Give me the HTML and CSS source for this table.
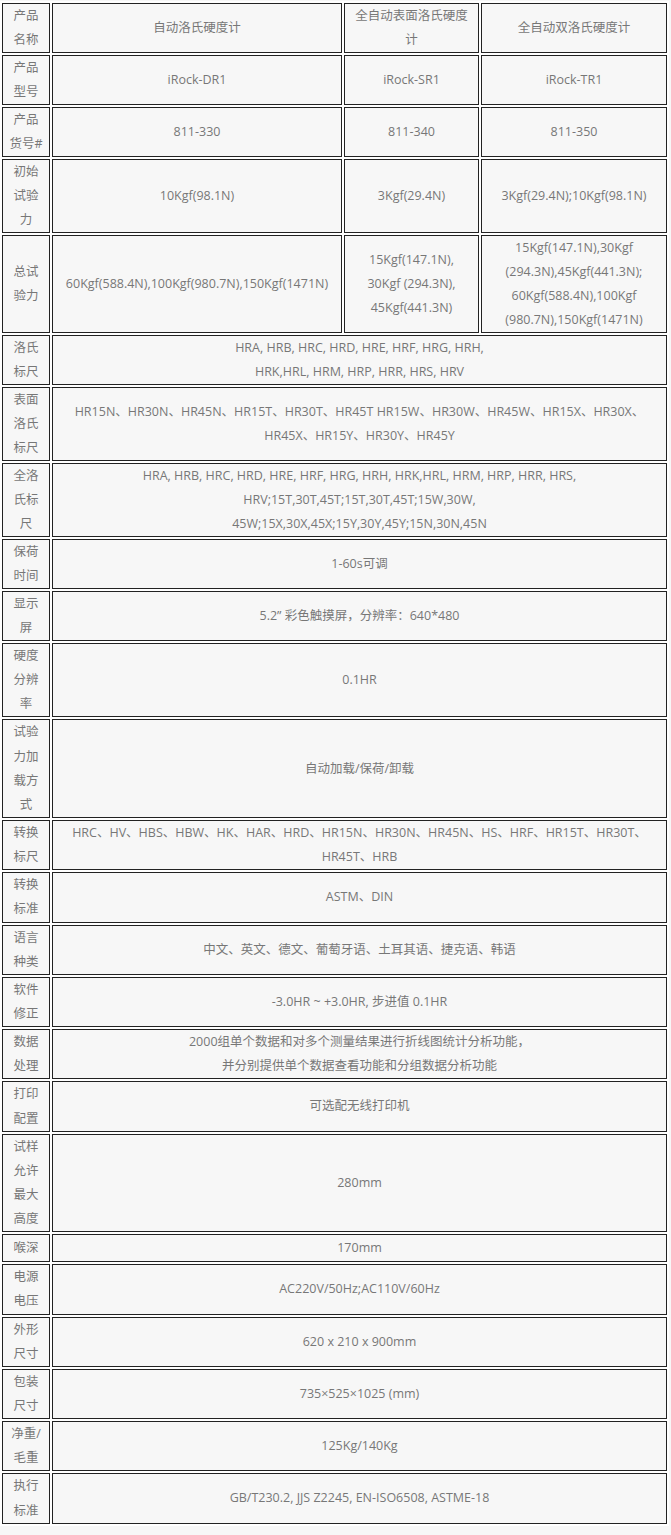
FILE: index.html
```html
<!DOCTYPE html>
<html lang="zh-CN">
<head>
<meta charset="utf-8">
<title>洛氏硬度计参数</title>
<link rel="stylesheet" href="styles.css">
</head>
<body>
<table class="spec">
<colgroup>
<col class="c-label">
<col class="c-a">
<col class="c-b">
<col class="c-c">
</colgroup>
<tbody>
<tr><td>产品<br>名称</td><td>自动洛氏硬度计</td><td>全自动表面洛氏硬度<br>计</td><td>全自动双洛氏硬度计</td></tr>
<tr><td>产品<br>型号</td><td>iRock-DR1</td><td>iRock-SR1</td><td>iRock-TR1</td></tr>
<tr><td>产品<br>货号#</td><td>811-330</td><td>811-340</td><td>811-350</td></tr>
<tr><td>初始<br>试验<br>力</td><td>10Kgf(98.1N)</td><td>3Kgf(29.4N)</td><td>3Kgf(29.4N);10Kgf(98.1N)</td></tr>
<tr><td>总试<br>验力</td><td>60Kgf(588.4N),100Kgf(980.7N),150Kgf(1471N)</td><td>15Kgf(147.1N),<br>30Kgf (294.3N),<br>45Kgf(441.3N)</td><td>15Kgf(147.1N),30Kgf<br>(294.3N),45Kgf(441.3N);<br>60Kgf(588.4N),100Kgf<br>(980.7N),150Kgf(1471N)</td></tr>
<tr><td>洛氏<br>标尺</td><td colspan="3">HRA, HRB, HRC, HRD, HRE, HRF, HRG, HRH,<br>HRK,HRL, HRM, HRP, HRR, HRS, HRV</td></tr>
<tr><td>表面<br>洛氏<br>标尺</td><td colspan="3">HR15N、HR30N、HR45N、HR15T、HR30T、HR45T HR15W、HR30W、HR45W、HR15X、HR30X、<br>HR45X、HR15Y、HR30Y、HR45Y</td></tr>
<tr><td>全洛<br>氏标<br>尺</td><td colspan="3">HRA, HRB, HRC, HRD, HRE, HRF, HRG, HRH, HRK,HRL, HRM, HRP, HRR, HRS,<br>HRV;15T,30T,45T;15T,30T,45T;15W,30W,<br>45W;15X,30X,45X;15Y,30Y,45Y;15N,30N,45N</td></tr>
<tr><td>保荷<br>时间</td><td colspan="3">1-60s可调</td></tr>
<tr><td>显示<br>屏</td><td colspan="3">5.2” 彩色触摸屏，分辨率：640*480</td></tr>
</tbody>
<tbody class="lower">
<tr><td>硬度<br>分辨<br>率</td><td colspan="3">0.1HR</td></tr>
<tr><td>试验<br>力加<br>载方<br>式</td><td colspan="3">自动加载/保荷/卸载</td></tr>
<tr><td>转换<br>标尺</td><td colspan="3">HRC、HV、HBS、HBW、HK、HAR、HRD、HR15N、HR30N、HR45N、HS、HRF、HR15T、HR30T、<br>HR45T、HRB</td></tr>
<tr><td>转换<br>标准</td><td colspan="3">ASTM、DIN</td></tr>
<tr><td>语言<br>种类</td><td colspan="3">中文、英文、德文、葡萄牙语、土耳其语、捷克语、韩语</td></tr>
<tr><td>软件<br>修正</td><td colspan="3">-3.0HR ~ +3.0HR, 步进值 0.1HR</td></tr>
<tr><td>数据<br>处理</td><td colspan="3">2000组单个数据和对多个测量结果进行折线图统计分析功能，<br>并分别提供单个数据查看功能和分组数据分析功能</td></tr>
<tr><td>打印<br>配置</td><td colspan="3">可选配无线打印机</td></tr>
<tr><td>试样<br>允许<br>最大<br>高度</td><td colspan="3">280mm</td></tr>
<tr class="single"><td>喉深</td><td colspan="3">170mm</td></tr>
<tr><td>电源<br>电压</td><td colspan="3">AC220V/50Hz;AC110V/60Hz</td></tr>
<tr><td>外形<br>尺寸</td><td colspan="3">620 x 210 x 900mm</td></tr>
<tr><td>包装<br>尺寸</td><td colspan="3">735×525×1025 (mm)</td></tr>
<tr><td>净重/<br>毛重</td><td colspan="3">125Kg/140Kg</td></tr>
<tr><td>执行<br>标准</td><td colspan="3">GB/T230.2, JJS Z2245, EN-ISO6508, ASTME-18</td></tr>
</tbody>
</table>
</body>
</html>
```
FILE: styles.css
```css
html, body {
  margin: 0;
  padding: 0;
  background: #f7f7f7;
}

body {
  font-family: "Open Sans", "Noto Sans CJK SC", sans-serif;
  font-size: 12.5px;
  color: #777;
}

.spec {
  table-layout: fixed;
  width: 667px;
  margin-top: 1px;
  border-collapse: separate;
  border-spacing: 2px;
  background: #fff;
}

.c-label { width: 48px; }
.c-a { width: 290px; }
.c-b { width: 135px; }
.c-c { width: 186px; }

.spec td {
  box-sizing: border-box;
  border: 1px solid #222;
  background: #f7f7f7;
  padding: 0 5px;
  line-height: 24px;
  text-align: center;
  vertical-align: middle;
  white-space: nowrap;
}

.spec .lower td {
  line-height: 24.14px;
}

.spec tr.single td {
  height: 28px;
}
```
